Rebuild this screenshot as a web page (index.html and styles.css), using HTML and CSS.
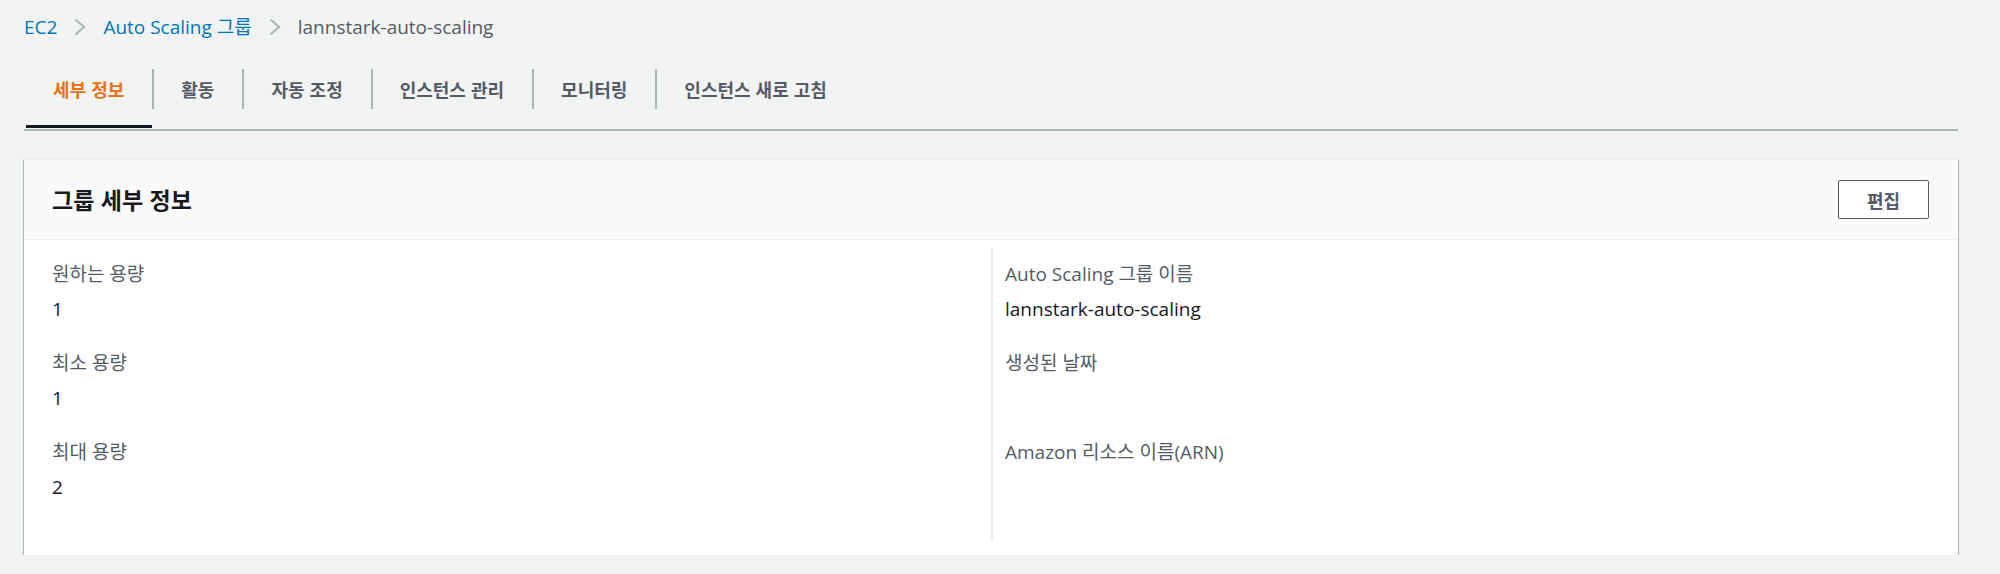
FILE: index.html
```html
<!DOCTYPE html>
<html lang="ko">
<head>
<meta charset="utf-8">
<title>lannstark-auto-scaling</title>
<link rel="stylesheet" href="styles.css">
</head>
<body>
<div class="page">
  <nav class="breadcrumbs">
    <span class="crumb-link">EC2</span>
    <svg class="chev" width="12" height="18" viewBox="0 0 12 18"><polyline points="1.5,1.5 10,9 1.5,16.5" fill="none" stroke="#aab7b8" stroke-width="2"/></svg>
    <span class="crumb-link">Auto Scaling 그룹</span>
    <svg class="chev" width="12" height="18" viewBox="0 0 12 18"><polyline points="1.5,1.5 10,9 1.5,16.5" fill="none" stroke="#aab7b8" stroke-width="2"/></svg>
    <span class="crumb-current">lannstark-auto-scaling</span>
  </nav>

  <div class="tabs">
    <div class="tab active">세부 정보</div>
    <span class="tab-sep"></span>
    <div class="tab">활동</div>
    <span class="tab-sep"></span>
    <div class="tab">자동 조정</div>
    <span class="tab-sep"></span>
    <div class="tab">인스턴스 관리</div>
    <span class="tab-sep"></span>
    <div class="tab">모니터링</div>
    <span class="tab-sep"></span>
    <div class="tab">인스턴스 새로 고침</div>
  </div>

  <section class="card">
    <header class="card-header">
      <h2 class="card-title">그룹 세부 정보</h2>
      <button class="btn">편집</button>
    </header>
    <div class="card-body">
      <div class="col">
        <div class="item"><div class="label">원하는 용량</div><div class="value">1</div></div>
        <div class="item"><div class="label">최소 용량</div><div class="value">1</div></div>
        <div class="item"><div class="label">최대 용량</div><div class="value">2</div></div>
      </div>
      <div class="col">
        <div class="item"><div class="label">Auto Scaling 그룹 이름</div><div class="value">lannstark-auto-scaling</div></div>
        <div class="item"><div class="label">생성된 날짜</div><div class="value"></div></div>
        <div class="item"><div class="label">Amazon 리소스 이름(ARN)</div><div class="value"></div></div>
      </div>
    </div>
  </section>
</div>
</body>
</html>
```
FILE: styles.css
```css
* { box-sizing: border-box; }
body {
  margin: 0;
  background: #f2f3f3;
  font-family: "Open Sans", "Noto Sans CJK KR", sans-serif;
  font-size: 19px;
  color: #16191f;
}
.page {
  margin-left: 24px;
  width: 1934px;
  padding-top: 14px;
}
.breadcrumbs {
  display: flex;
  align-items: center;
  gap: 17px;
  height: 26px;
  line-height: 26px;
}
.crumb-link { color: #0073bb; }
.crumb-current { color: #545b64; }
.chev { display: block; }

.tabs {
  display: flex;
  align-items: center;
  margin-top: 8px;
  height: 83px;
  border-bottom: 2px solid #aab7b8;
  padding-left: 2px;
}
.tab {
  height: 100%;
  display: flex;
  align-items: center;
  padding: 0 28px 0 27px;
  font-family: "Noto Sans CJK KR", sans-serif;
  font-weight: 700;
  font-size: 18px;
  color: #545b64;
}
.tab.active {
  color: #ec7211;
  background: linear-gradient(#16191f, #16191f) left 0 bottom 1px / 100% 3px no-repeat;
}
.tab-sep {
  width: 2px;
  height: 40px;
  background: #aab7b8;
}

.card {
  margin-top: 28px;
  background: #fff;
  border-top: 1px solid #eaeded;
  box-shadow: 0 1px 1px 0 rgba(0, 28, 36, 0.45), 1px 1px 1px 0 rgba(0, 28, 36, 0.2), -1px 1px 1px 0 rgba(0, 28, 36, 0.2);
}
.card-header {
  height: 80px;
  display: flex;
  align-items: center;
  justify-content: space-between;
  padding: 0 29px 0 28px;
  background: #fafafa;
  border-bottom: 1px solid #eaeded;
}
.card-title {
  margin: 0;
  font-family: "Noto Sans CJK KR", sans-serif;
  font-size: 23px;
  font-weight: 700;
  line-height: 1;
  color: #16191f;
}
.btn {
  width: 91px;
  height: 39px;
  border: 1px solid #545b64;
  border-radius: 2px;
  background: #fff;
  color: #545b64;
  font-family: "Noto Sans CJK KR", sans-serif;
  font-weight: 700;
  font-size: 18px;
  padding: 0;
}
.card-body {
  display: grid;
  grid-template-columns: 1fr 1fr;
  padding: 9px 28px 15px;
}
.col {
  padding: 12px 0 40px;
}
.col + .col {
  border-left: 2px solid #eaeded;
  padding-left: 12px;
}
.item + .item { margin-top: 28px; }
.label {
  color: #545b64;
  line-height: 26px;
}
.value {
  margin-top: 9px;
  line-height: 26px;
  min-height: 26px;
}
```
